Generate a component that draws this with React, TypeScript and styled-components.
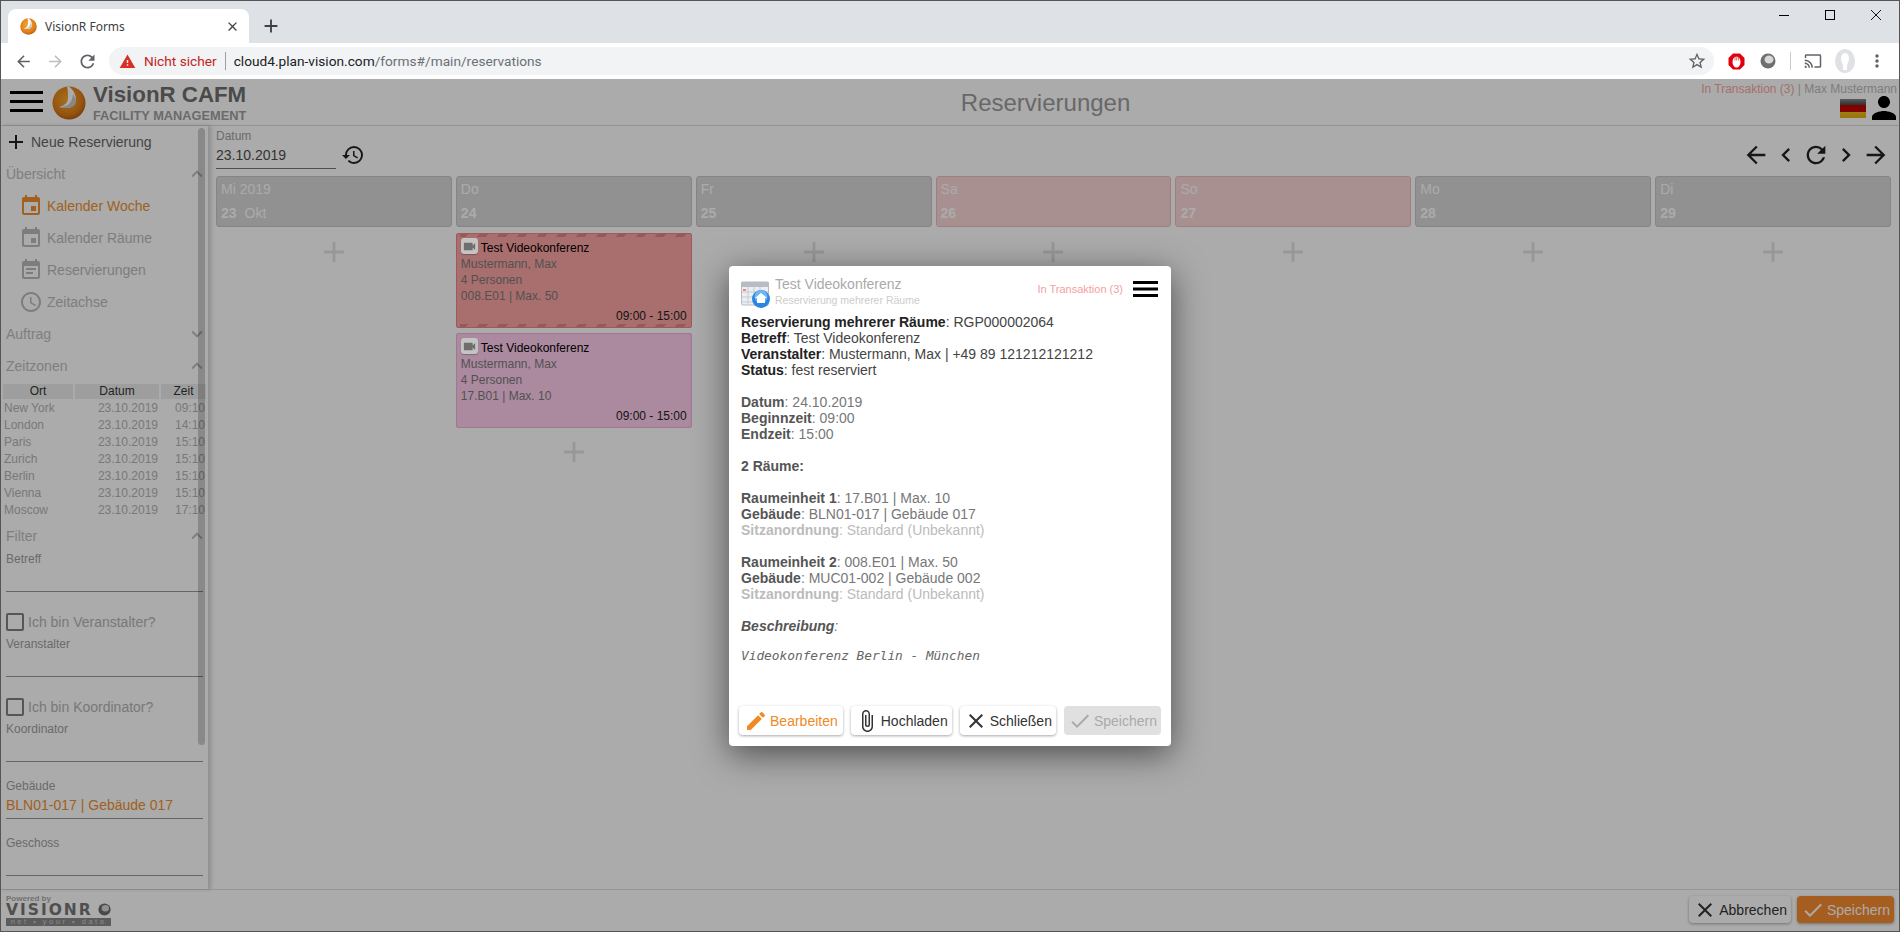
import React from "react";
import styled, { createGlobalStyle } from "styled-components";
import {
  MdAccessTime,
  MdAdd,
  MdArrowBack,
  MdArrowForward,
  MdAttachFile,
  MdCast,
  MdCheck,
  MdChevronLeft,
  MdChevronRight,
  MdClose,
  MdEdit,
  MdEvent,
  MdEventNote,
  MdExpandLess,
  MdExpandMore,
  MdHistory,
  MdMoreVert,
  MdPerson,
  MdRefresh,
  MdStarBorder,
  MdVideocam,
  MdWarning,
} from "react-icons/md";

const GlobalStyle = createGlobalStyle`
  html, body {
    margin: 0;
    height: 100%;
    overflow: hidden;
    background: #fff;
    font-family: "Liberation Sans", Arial, sans-serif;
  }
  * {
    box-sizing: border-box;
  }
`;

const Window = styled.div`
  display: flex;
  flex-direction: column;
  width: 1900px;
  height: 932px;
  border: 1px solid #555;
  overflow: hidden;
`;

/* browser chrome */

const TabStrip = styled.div`
  display: flex;
  flex: 0 0 42px;
  background: #dee1e6;
  padding-left: 7px;
`;

const Tab = styled.div`
  display: flex;
  align-items: center;
  gap: 8px;
  width: 241px;
  height: 34px;
  margin-top: 8px;
  padding: 0 9px 0 12px;
  background: #fff;
  border-radius: 8px 8px 0 0;
  font: 12px "Noto Sans", sans-serif;
  color: #3c4043;
`;

const TabTitle = styled.span`
  flex: 1;
`;

const NewTab = styled.div`
  display: flex;
  align-items: center;
  justify-content: center;
  width: 28px;
  height: 34px;
  margin: 8px 0 0 8px;
  color: #3c4043;
`;

const WindowControls = styled.div`
  display: flex;
  margin-left: auto;
`;

const WindowControl = styled.div`
  display: flex;
  align-items: center;
  justify-content: center;
  width: 46px;
  height: 28px;
`;

const Toolbar = styled.div`
  display: flex;
  flex: 0 0 36px;
  align-items: center;
  padding: 0 6px;
  background: #fff;
`;

const ToolButton = styled.div<{ $muted?: boolean }>`
  display: flex;
  align-items: center;
  justify-content: center;
  width: 32px;
  height: 28px;
  color: ${(p) => (p.$muted ? "#bcbec2" : "#5f6368")};
`;

const Omnibox = styled.div`
  display: flex;
  flex: 1;
  align-items: center;
  height: 28px;
  margin: 0 6px;
  padding: 0 7px 0 10px;
  background: #f1f3f4;
  border-radius: 14px;
  font: 13.7px Roboto, sans-serif;
`;

const NotSecure = styled.span`
  margin-left: 8px;
  color: #c5221f;
`;

const OmniDivider = styled.span`
  width: 1px;
  height: 18px;
  margin: 0 8px 0 8px;
  background: #9aa0a6;
`;

const Host = styled.span`
  color: #202124;
`;

const UrlPath = styled.span`
  flex: 1;
  color: #6b7074;
`;

const ToolDivider = styled.span`
  width: 1px;
  height: 18px;
  margin: 0 6px;
  background: #c8cacd;
`;

/* application */

const AppFrame = styled.div`
  position: relative;
  display: flex;
  flex: 1;
  flex-direction: column;
  min-height: 0;
  color: #666;
  background: #fff;
`;

const Scrim = styled.div`
  position: absolute;
  inset: 0;
  z-index: 10;
  display: flex;
  align-items: center;
  justify-content: center;
  padding-top: 2px;
  background: rgba(0, 0, 0, 0.33);
`;

const AppHeader = styled.header`
  display: flex;
  flex: 0 0 47px;
  min-height: 0;
  padding-left: 9px;
  border-bottom: 1px solid #dcdcdc;
`;

const Brand = styled.div`
  display: flex;
  align-items: flex-start;
  width: 240px;
`;

const MenuButton = styled.div`
  margin-top: 12px;
  line-height: 0;
`;

const BrandLogo = styled.div`
  margin: 7px 7px 0 9px;
  line-height: 0;
`;

const BrandText = styled.div`
  display: flex;
  flex-direction: column;
  font-weight: bold;
`;

const BrandName = styled.span`
  margin-top: 4px;
  font-size: 22.3px;
  line-height: 24px;
  color: #6f6f6f;
`;

const BrandTag = styled.span`
  margin-top: 2px;
  font-size: 12.8px;
  line-height: 13px;
  color: #9f9f9f;
`;

const HeaderTitle = styled.h1`
  flex: 1;
  margin: 0;
  padding: 9px 0 0 140px;
  text-align: center;
  font-size: 24px;
  font-weight: normal;
  line-height: 30px;
  color: #9c9c9c;
`;

const UserBlock = styled.div`
  display: flex;
  flex-direction: column;
  align-items: flex-end;
  padding: 3px 2px 0 0;
`;

const UserText = styled.div`
  font-size: 12px;
  line-height: 14px;
  color: #bbb;
`;

const Transaction = styled.span`
  color: #f5a8a0;
`;

const UserIcons = styled.div`
  display: flex;
  align-items: center;
  height: 24px;
  margin-right: -5px;
  line-height: 0;
  color: #000;
`;

const Flag = styled.div`
  width: 26px;
  height: 19px;
  background: linear-gradient(
    #888 0%,
    #444 33%,
    #c00000 33%,
    #c00000 66%,
    #f0c020 66%,
    #e0b010 100%
  );
`;

const AppBody = styled.div`
  display: flex;
  flex: 1;
  min-height: 0;
`;

const Sidebar = styled.aside`
  position: relative;
  flex: 0 0 208px;
  overflow: hidden;
  border-right: 1px solid #ddd;
  box-shadow: 2px 0 4px rgba(0, 0, 0, 0.18);
`;

const ScrollThumb = styled.div`
  position: absolute;
  top: 2px;
  left: 197px;
  width: 7px;
  height: 617px;
  border-radius: 4px;
  background: rgba(0, 0, 0, 0.2);
`;

const NewRow = styled.div`
  display: flex;
  align-items: center;
  gap: 3px;
  height: 32px;
  padding-left: 3px;
  font-size: 14px;
  color: #666;
  svg {
    color: #222;
  }
`;

const SectionRow = styled.div`
  display: flex;
  align-items: center;
  justify-content: space-between;
  height: 32px;
  padding-left: 5px;
  font-size: 14px;
  color: #bdbdbd;
`;

const NavItem = styled.div<{ $active?: boolean }>`
  display: flex;
  align-items: center;
  gap: 4px;
  height: 32px;
  padding-left: 18px;
  font-size: 14px;
  color: ${(p) => (p.$active ? "#f09030" : "#bbb")};
`;

const ZoneTable = styled.div`
  display: grid;
  grid-template-columns: 70px 84px 45px;
  column-gap: 2px;
  width: 201px;
  margin: 2px 0 1px 2px;
  font-size: 12px;
  line-height: 17px;
  color: #b4b4b4;
`;

const ZoneHead = styled.div`
  height: 15px;
  margin-bottom: 1px;
  line-height: 15px;
  text-align: center;
  background: #ececec;
  color: #333;
`;

const ZoneCell = styled.div<{ $right?: boolean }>`
  padding: ${(p) => (p.$right ? "0 1px 0 0" : "0 0 0 1px")};
  text-align: ${(p) => (p.$right ? "right" : "left")};
`;

const Field = styled.div`
  width: 197px;
  height: 40px;
  margin-left: 5px;
  border-bottom: 1px solid #999;
  & + & {
    margin-top: 17px;
  }
`;

const FieldLabel = styled.div`
  font-size: 12px;
  line-height: 14px;
  color: #a0a0a0;
`;

const FieldValue = styled.div`
  font-size: 14px;
  line-height: 25px;
  color: #f09030;
`;

const CheckRow = styled.div`
  display: flex;
  align-items: center;
  gap: 4px;
  height: 18px;
  margin: 21px 0 6px 5px;
  font-size: 14px;
  color: #b4b4b4;
`;

const CheckBox = styled.span`
  width: 18px;
  height: 18px;
  border: 2px solid #808080;
  border-radius: 2px;
`;

const Content = styled.main`
  flex: 1;
  min-width: 0;
  padding: 0 8px 0 7px;
`;

const DateBar = styled.div`
  display: flex;
  align-items: center;
  height: 50px;
`;

const DateField = styled.div`
  width: 120px;
  height: 43px;
  margin-top: -7px;
  border-bottom: 1px solid #777;
`;

const DateLabel = styled.div`
  font-size: 12px;
  line-height: 14px;
  padding-top: 3px;
  color: #a0a0a0;
`;

const DateValue = styled.div`
  font-size: 14px;
  line-height: 22px;
  margin-top: 1px;
  color: #4d4d4d;
`;

const HistoryButton = styled.div`
  margin: 8px 0 0 5px;
  line-height: 0;
  color: #222;
`;

const Pager = styled.div`
  display: flex;
  gap: 2px;
  margin: 8px 1px 0 auto;
  line-height: 0;
  color: #222;
`;

const Week = styled.div`
  display: grid;
  grid-template-columns: repeat(7, 1fr);
  gap: 4px;
`;

const DayHeader = styled.div<{ $weekend?: boolean }>`
  height: 51px;
  padding-left: 4px;
  border: 1px solid ${(p) => (p.$weekend ? "#f0bcbc" : "#c6c6c6")};
  border-radius: 3px;
  background: ${(p) => (p.$weekend ? "#fbd7d7" : "#d8d8d8")};
  color: #fff;
  font-size: 14px;
`;

const DayName = styled.div`
  height: 24px;
  line-height: 24px;
`;

const DayDate = styled.div`
  height: 25px;
  line-height: 25px;
  font-weight: bold;
`;

const MonthName = styled.span`
  margin-left: 8px;
  font-weight: normal;
`;

const EventCard = styled.div<{ $tone: "red" | "purple" }>`
  position: relative;
  display: flex;
  flex-direction: column;
  height: 95px;
  margin-top: 6px;
  padding: 4px 4px 3px;
  border: 1px solid ${(p) => (p.$tone === "red" ? "#ee8585" : "#f0b0dc")};
  border-radius: 2px;
  background: ${(p) => (p.$tone === "red" ? "#fca5a5" : "#ffceef")};
  overflow: hidden;
  & + & {
    margin-top: 5px;
  }
  &::before,
  &::after {
    content: ${(p) => (p.$tone === "red" ? '""' : "none")};
    position: absolute;
    left: 3px;
    right: 3px;
    height: 3px;
    background: repeating-linear-gradient(
      135deg,
      #e08585 0 6px,
      transparent 6px 14px
    );
  }
  &::before {
    top: 0;
  }
  &::after {
    bottom: 0;
  }
`;

const EventTitleRow = styled.div`
  display: flex;
  height: 18px;
  color: #000;
  font-size: 12px;
  line-height: 20px;
`;

const VideoBadge = styled.span`
  position: relative;
  z-index: 11;
  display: flex;
  align-items: center;
  justify-content: center;
  width: 17px;
  height: 16px;
  margin-right: 3px;
  border-radius: 3px;
  background: #c4c4c4;
  box-shadow: 0 1px 1px rgba(0, 0, 0, 0.25);
  color: #6e6e6e;
`;

const EventLine = styled.div`
  font-size: 12px;
  line-height: 16px;
  color: #7a7a7a;
`;

const EventTime = styled.div`
  margin-top: auto;
  text-align: right;
  font-size: 12px;
  line-height: 16px;
  color: #222;
`;

const AddSlot = styled.div<{ $tight?: boolean }>`
  display: flex;
  align-items: center;
  justify-content: center;
  height: 38px;
  margin-top: ${(p) => (p.$tight ? "5px" : "6px")};
  color: #e2e2e2;
`;

const AppFooter = styled.footer`
  display: flex;
  flex: 0 0 42px;
  align-items: center;
  justify-content: space-between;
  padding: 0 5px 2px 5px;
  border-top: 1px solid #e0e0e0;
`;

const Powered = styled.div`
  display: flex;
  flex-direction: column;
  width: 105px;
  font-weight: bold;
`;

const PoweredBy = styled.span`
  font-size: 8px;
  line-height: 9px;
  color: #aaa;
`;

const PoweredName = styled.div`
  display: flex;
  align-items: center;
  justify-content: space-between;
  height: 14px;
  font: bold 15.5px "DejaVu Sans", sans-serif;
  letter-spacing: 2px;
  color: #777;
  line-height: 0;
`;

const PoweredStrip = styled.span`
  height: 8px;
  margin-top: 1px;
  background: #8a8a8a;
  color: #ccc;
  font-size: 7.5px;
  font-weight: normal;
  line-height: 8px;
  letter-spacing: 2.5px;
  text-align: center;
  white-space: nowrap;
`;

const FooterActions = styled.div`
  display: flex;
  gap: 6px;
`;

const ActionButton = styled.button<{
  $variant?: "default" | "edit" | "disabled" | "primary";
  $height?: number;
}>`
  display: flex;
  align-items: center;
  gap: 2px;
  height: ${(p) => p.$height ?? 29}px;
  padding: 0 ${(p) => (p.$variant === "edit" ? 5 : 4)}px;
  border: 0;
  border-radius: 4px;
  font: 14px "Liberation Sans", Arial, sans-serif;
  white-space: nowrap;
  color: ${(p) =>
    p.$variant === "edit"
      ? "#ef8a25"
      : p.$variant === "disabled"
        ? "#aaa"
        : p.$variant === "primary"
          ? "#fff"
          : "#333"};
  background: ${(p) =>
    p.$variant === "disabled"
      ? "#e0e0e0"
      : p.$variant === "primary"
        ? "#f68c30"
        : "#fff"};
  box-shadow: ${(p) =>
    p.$variant === "disabled" ? "none" : "0 1px 3px rgba(0, 0, 0, 0.35)"};
`;

/* dialog */

const Dialog = styled.div`
  display: flex;
  flex-direction: column;
  width: 442px;
  height: 480px;
  border-radius: 4px;
  background: #fff;
  box-shadow: 0 8px 34px rgba(0, 0, 0, 0.55);
`;

const DialogHead = styled.div`
  display: flex;
  flex: 0 0 48px;
  align-items: center;
  padding: 0 13px 0 12px;
`;

const DialogIcon = styled.div`
  margin: 8px 4px 0 0;
  line-height: 0;
`;

const DialogTitles = styled.div`
  display: flex;
  flex: 1;
  flex-direction: column;
  margin-top: 4px;
`;

const DialogTitle = styled.span`
  font-size: 14px;
  line-height: 16px;
  color: #aaa;
`;

const DialogSubtitle = styled.span`
  font-size: 10.5px;
  line-height: 16px;
  color: #ccc;
`;

const DialogStatus = styled.div`
  display: flex;
  align-items: center;
  gap: 10px;
  margin-bottom: 2px;
  font-size: 11px;
  color: #f5a0a0;
  line-height: 0;
`;

const DialogBody = styled.div`
  flex: 1;
  padding: 0 12px;
  font-size: 14px;
  line-height: 16px;
`;

const toneColor = { dark: "#444", mid: "#777", light: "#bbb" };
const toneStrong = { dark: "#222", mid: "#555", light: "#bbb" };

type Tone = keyof typeof toneColor;

const InfoLine = styled.div<{ $tone: Tone; $gap?: boolean }>`
  margin-top: ${(p) => (p.$gap ? "16px" : "0")};
  color: ${(p) => toneColor[p.$tone]};
  strong {
    color: ${(p) => toneStrong[p.$tone]};
  }
`;

const Description = styled.div`
  margin-top: 14px;
  font: italic 12.8px "DejaVu Sans Mono", "Liberation Mono", monospace;
  line-height: 16px;
  color: #666;
`;

const DialogActions = styled.div`
  display: flex;
  justify-content: flex-end;
  gap: 8px;
  padding: 0 10px 11px;
`;

/* drawings */

const BallLogo: React.FC<{ size: number; id: string }> = ({ size, id }) => (
  <svg width={size} height={size} viewBox="0 0 34 34">
    <defs>
      <radialGradient id={id} cx="0.45" cy="0.4" r="0.65">
        <stop offset="0" stopColor="#f7a92c" />
        <stop offset="0.7" stopColor="#e07d17" />
        <stop offset="1" stopColor="#a8560f" />
      </radialGradient>
    </defs>
    <circle cx="17" cy="17" r="16.5" fill={`url(#${id})`} />
    <path
      d="M17 0.5 C22 4 24 10 24 14 C24 20 18 24 7 21 C12 20 16 17 16 12 C16 8 16 4 15 0.6 Z"
      fill="#fff"
    />
    <path d="M24 14 C24 20 18 24 7 21 C14 21 20 19 21 8 Z" fill="#c9c9c9" />
  </svg>
);

const Hamburger: React.FC<{ width: number; height: number; thick: number }> = ({
  width,
  height,
  thick,
}) => (
  <svg width={width} height={height} viewBox={`0 0 ${width} ${height}`}>
    <rect width={width} height={thick} fill="#000" />
    <rect y={(height - thick) / 2} width={width} height={thick} fill="#000" />
    <rect y={height - thick} width={width} height={thick} fill="#000" />
  </svg>
);

const BlockerIcon = () => (
  <svg width="17" height="17" viewBox="0 0 17 17">
    <path d="M5 0.5h7l4.5 4.5v7L12 16.5H5L0.5 12V5z" fill="#e2000f" />
    <ellipse cx="8.5" cy="9" rx="4" ry="5.5" fill="#fff" />
    <path d="M7 3.5v4M8.7 3.5v4M10.4 3.5v4" stroke="#e2000f" strokeWidth="0.6" />
  </svg>
);

const GreyBallIcon: React.FC<{ size?: number }> = ({ size = 16 }) => (
  <svg width={size} height={size} viewBox="0 0 16 16">
    <circle cx="8" cy="8" r="7.5" fill="#6e6e6e" />
    <ellipse cx="9" cy="6.5" rx="4.5" ry="4" fill="#d8d8d8" />
  </svg>
);

const AvatarIcon = () => (
  <svg width="20" height="24" viewBox="0 0 20 24">
    <ellipse cx="10" cy="12" rx="10" ry="12" fill="#dfe1e5" />
    <path
      d="M6 9c0-3 2-5 4-5s4 2 4 5-1 5-2 7l0 5H8l0-5C7 14 6 12 6 9z"
      fill="#fff"
    />
  </svg>
);

const RoomsIcon = () => (
  <svg width="30" height="27" viewBox="0 0 30 27">
    <rect x="0.5" y="1" width="27" height="23" rx="1" fill="#eceef2" stroke="#bbb" />
    <rect x="0.5" y="1" width="27" height="5" fill="#b9bcc2" />
    <path
      d="M1 11h26M1 16h26M1 21h26M7 6v18M13 6v18M19 6v18"
      stroke="#c7cbd3"
      strokeWidth="1"
    />
    <rect x="2" y="8" width="3" height="2" fill="#e88" />
    <circle cx="20" cy="18" r="9" fill="#2a86e0" />
    <circle cx="20" cy="15.5" r="6.5" fill="#6db6f5" />
    <path d="M20 12l6 5h-2v5h-8v-5h-2z" fill="#fff" />
  </svg>
);

const days = [
  { name: "Mi 2019", date: "23", month: "Okt" },
  { name: "Do", date: "24" },
  { name: "Fr", date: "25" },
  { name: "Sa", date: "26", weekend: true },
  { name: "So", date: "27", weekend: true },
  { name: "Mo", date: "28" },
  { name: "Di", date: "29" },
];

const bookings: { tone: "red" | "purple"; room: string }[] = [
  { tone: "red", room: "008.E01 | Max. 50" },
  { tone: "purple", room: "17.B01 | Max. 10" },
];

const zones = [
  ["New York", "09:10"],
  ["London", "14:10"],
  ["Paris", "15:10"],
  ["Zurich", "15:10"],
  ["Berlin", "15:10"],
  ["Vienna", "15:10"],
  ["Moscow", "17:10"],
];

const App: React.FC = () => {
  return (
    <>
      <GlobalStyle />
      <Window>
        <TabStrip>
          <Tab>
            <BallLogo size={17} id="tab-ball" />
            <TabTitle>VisionR Forms</TabTitle>
            <MdClose size={15} />
          </Tab>
          <NewTab>
            <MdAdd size={22} />
          </NewTab>
          <WindowControls>
            <WindowControl>
              <svg width="10" height="10" viewBox="0 0 10 10">
                <path d="M0 5.5h10" stroke="#000" />
              </svg>
            </WindowControl>
            <WindowControl>
              <svg width="10" height="10" viewBox="0 0 10 10">
                <rect x="0.5" y="0.5" width="9" height="9" fill="none" stroke="#000" />
              </svg>
            </WindowControl>
            <WindowControl>
              <svg width="10" height="10" viewBox="0 0 10 10">
                <path d="M0 0l10 10M10 0L0 10" stroke="#000" strokeWidth="0.9" />
              </svg>
            </WindowControl>
          </WindowControls>
        </TabStrip>
        <Toolbar>
          <ToolButton>
            <MdArrowBack size={19} />
          </ToolButton>
          <ToolButton $muted>
            <MdArrowForward size={19} />
          </ToolButton>
          <ToolButton>
            <MdRefresh size={21} />
          </ToolButton>
          <Omnibox>
            <MdWarning size={17} color="#d93025" />
            <NotSecure>Nicht sicher</NotSecure>
            <OmniDivider />
            <Host>cloud4.plan-vision.com</Host>
            <UrlPath>/forms#/main/reservations</UrlPath>
            <MdStarBorder size={20} color="#5f6368" />
          </Omnibox>
          <ToolButton>
            <BlockerIcon />
          </ToolButton>
          <ToolButton>
            <GreyBallIcon />
          </ToolButton>
          <ToolDivider />
          <ToolButton>
            <MdCast size={18} />
          </ToolButton>
          <ToolButton>
            <AvatarIcon />
          </ToolButton>
          <ToolButton>
            <MdMoreVert size={20} />
          </ToolButton>
        </Toolbar>

        <AppFrame>
          <AppHeader>
            <Brand>
              <MenuButton>
                <Hamburger width={33} height={21} thick={3} />
              </MenuButton>
              <BrandLogo>
                <BallLogo size={34} id="brand-ball" />
              </BrandLogo>
              <BrandText>
                <BrandName>VisionR CAFM</BrandName>
                <BrandTag>FACILITY MANAGEMENT</BrandTag>
              </BrandText>
            </Brand>
            <HeaderTitle>Reservierungen</HeaderTitle>
            <UserBlock>
              <UserText>
                <Transaction>In Transaktion (3)</Transaction> | Max Mustermann
              </UserText>
              <UserIcons>
                <Flag />
                <MdPerson size={36} />
              </UserIcons>
            </UserBlock>
          </AppHeader>

          <AppBody>
            <Sidebar>
              <NewRow>
                <MdAdd size={24} />
                Neue Reservierung
              </NewRow>
              <SectionRow>
                Übersicht
                <MdExpandLess size={22} />
              </SectionRow>
              <NavItem $active>
                <MdEvent size={24} />
                Kalender Woche
              </NavItem>
              <NavItem>
                <MdEvent size={24} />
                Kalender Räume
              </NavItem>
              <NavItem>
                <MdEventNote size={24} />
                Reservierungen
              </NavItem>
              <NavItem>
                <MdAccessTime size={24} />
                Zeitachse
              </NavItem>
              <SectionRow>
                Auftrag
                <MdExpandMore size={22} />
              </SectionRow>
              <SectionRow>
                Zeitzonen
                <MdExpandLess size={22} />
              </SectionRow>
              <ZoneTable>
                <ZoneHead>Ort</ZoneHead>
                <ZoneHead>Datum</ZoneHead>
                <ZoneHead>Zeit</ZoneHead>
                {zones.map(([city, time]) => (
                  <React.Fragment key={city}>
                    <ZoneCell>{city}</ZoneCell>
                    <ZoneCell $right>23.10.2019</ZoneCell>
                    <ZoneCell $right>{time}</ZoneCell>
                  </React.Fragment>
                ))}
              </ZoneTable>
              <SectionRow>
                Filter
                <MdExpandLess size={22} />
              </SectionRow>
              <Field>
                <FieldLabel>Betreff</FieldLabel>
              </Field>
              <CheckRow>
                <CheckBox />
                Ich bin Veranstalter?
              </CheckRow>
              <Field>
                <FieldLabel>Veranstalter</FieldLabel>
              </Field>
              <CheckRow>
                <CheckBox />
                Ich bin Koordinator?
              </CheckRow>
              <Field>
                <FieldLabel>Koordinator</FieldLabel>
              </Field>
              <Field>
                <FieldLabel>Gebäude</FieldLabel>
                <FieldValue>BLN01-017 | Gebäude 017</FieldValue>
              </Field>
              <Field>
                <FieldLabel>Geschoss</FieldLabel>
              </Field>
              <ScrollThumb />
            </Sidebar>

            <Content>
              <DateBar>
                <DateField>
                  <DateLabel>Datum</DateLabel>
                  <DateValue>23.10.2019</DateValue>
                </DateField>
                <HistoryButton>
                  <MdHistory size={24} />
                </HistoryButton>
                <Pager>
                  <MdArrowBack size={28} />
                  <MdChevronLeft size={28} />
                  <MdRefresh size={28} />
                  <MdChevronRight size={28} />
                  <MdArrowForward size={28} />
                </Pager>
              </DateBar>
              <Week>
                {days.map((day) => (
                  <div key={day.date}>
                    <DayHeader $weekend={day.weekend}>
                      <DayName>{day.name}</DayName>
                      <DayDate>
                        {day.date}
                        {day.month && <MonthName>{day.month}</MonthName>}
                      </DayDate>
                    </DayHeader>
                    {day.date === "24" &&
                      bookings.map((booking) => (
                        <EventCard key={booking.tone} $tone={booking.tone}>
                          <EventTitleRow>
                            <VideoBadge>
                              <MdVideocam size={15} />
                            </VideoBadge>
                            Test Videokonferenz
                          </EventTitleRow>
                          <EventLine>Mustermann, Max</EventLine>
                          <EventLine>4 Personen</EventLine>
                          <EventLine>{booking.room}</EventLine>
                          <EventTime>09:00 - 15:00</EventTime>
                        </EventCard>
                      ))}
                    <AddSlot $tight={day.date === "24"}>
                      <MdAdd size={34} />
                    </AddSlot>
                  </div>
                ))}
              </Week>
            </Content>
          </AppBody>

          <AppFooter>
            <Powered>
              <PoweredBy>Powered by</PoweredBy>
              <PoweredName>
                VISIONR
                <GreyBallIcon size={13} />
              </PoweredName>
              <PoweredStrip>net • your • data</PoweredStrip>
            </Powered>
            <FooterActions>
              <ActionButton $height={27}>
                <MdClose size={24} />
                Abbrechen
              </ActionButton>
              <ActionButton $height={27} $variant="primary">
                <MdCheck size={24} />
                Speichern
              </ActionButton>
            </FooterActions>
          </AppFooter>

          <Scrim>
            <Dialog>
              <DialogHead>
                <DialogIcon>
                  <RoomsIcon />
                </DialogIcon>
                <DialogTitles>
                  <DialogTitle>Test Videokonferenz</DialogTitle>
                  <DialogSubtitle>Reservierung mehrerer Räume</DialogSubtitle>
                </DialogTitles>
                <DialogStatus>
                  In Transaktion (3)
                  <Hamburger width={25} height={16} thick={3} />
                </DialogStatus>
              </DialogHead>
              <DialogBody>
                <InfoLine $tone="dark">
                  <strong>Reservierung mehrerer Räume</strong>: RGP000002064
                </InfoLine>
                <InfoLine $tone="dark">
                  <strong>Betreff</strong>: Test Videokonferenz
                </InfoLine>
                <InfoLine $tone="dark">
                  <strong>Veranstalter</strong>: Mustermann, Max | +49 89 121212121212
                </InfoLine>
                <InfoLine $tone="dark">
                  <strong>Status</strong>: fest reserviert
                </InfoLine>
                <InfoLine $tone="mid" $gap>
                  <strong>Datum</strong>: 24.10.2019
                </InfoLine>
                <InfoLine $tone="mid">
                  <strong>Beginnzeit</strong>: 09:00
                </InfoLine>
                <InfoLine $tone="mid">
                  <strong>Endzeit</strong>: 15:00
                </InfoLine>
                <InfoLine $tone="mid" $gap>
                  <strong>2 Räume:</strong>
                </InfoLine>
                <InfoLine $tone="mid" $gap>
                  <strong>Raumeinheit 1</strong>: 17.B01 | Max. 10
                </InfoLine>
                <InfoLine $tone="mid">
                  <strong>Gebäude</strong>: BLN01-017 | Gebäude 017
                </InfoLine>
                <InfoLine $tone="light">
                  <strong>Sitzanordnung</strong>: Standard (Unbekannt)
                </InfoLine>
                <InfoLine $tone="mid" $gap>
                  <strong>Raumeinheit 2</strong>: 008.E01 | Max. 50
                </InfoLine>
                <InfoLine $tone="mid">
                  <strong>Gebäude</strong>: MUC01-002 | Gebäude 002
                </InfoLine>
                <InfoLine $tone="light">
                  <strong>Sitzanordnung</strong>: Standard (Unbekannt)
                </InfoLine>
                <InfoLine $tone="mid" $gap>
                  <em>
                    <strong>Beschreibung</strong>:
                  </em>
                </InfoLine>
                <Description>Videokonferenz Berlin - München</Description>
              </DialogBody>
              <DialogActions>
                <ActionButton $variant="edit">
                  <MdEdit size={24} />
                  Bearbeiten
                </ActionButton>
                <ActionButton>
                  <MdAttachFile size={24} />
                  Hochladen
                </ActionButton>
                <ActionButton>
                  <MdClose size={24} />
                  Schließen
                </ActionButton>
                <ActionButton $variant="disabled">
                  <MdCheck size={24} />
                  Speichern
                </ActionButton>
              </DialogActions>
            </Dialog>
          </Scrim>
        </AppFrame>
      </Window>
    </>
  );
};

export default App;
